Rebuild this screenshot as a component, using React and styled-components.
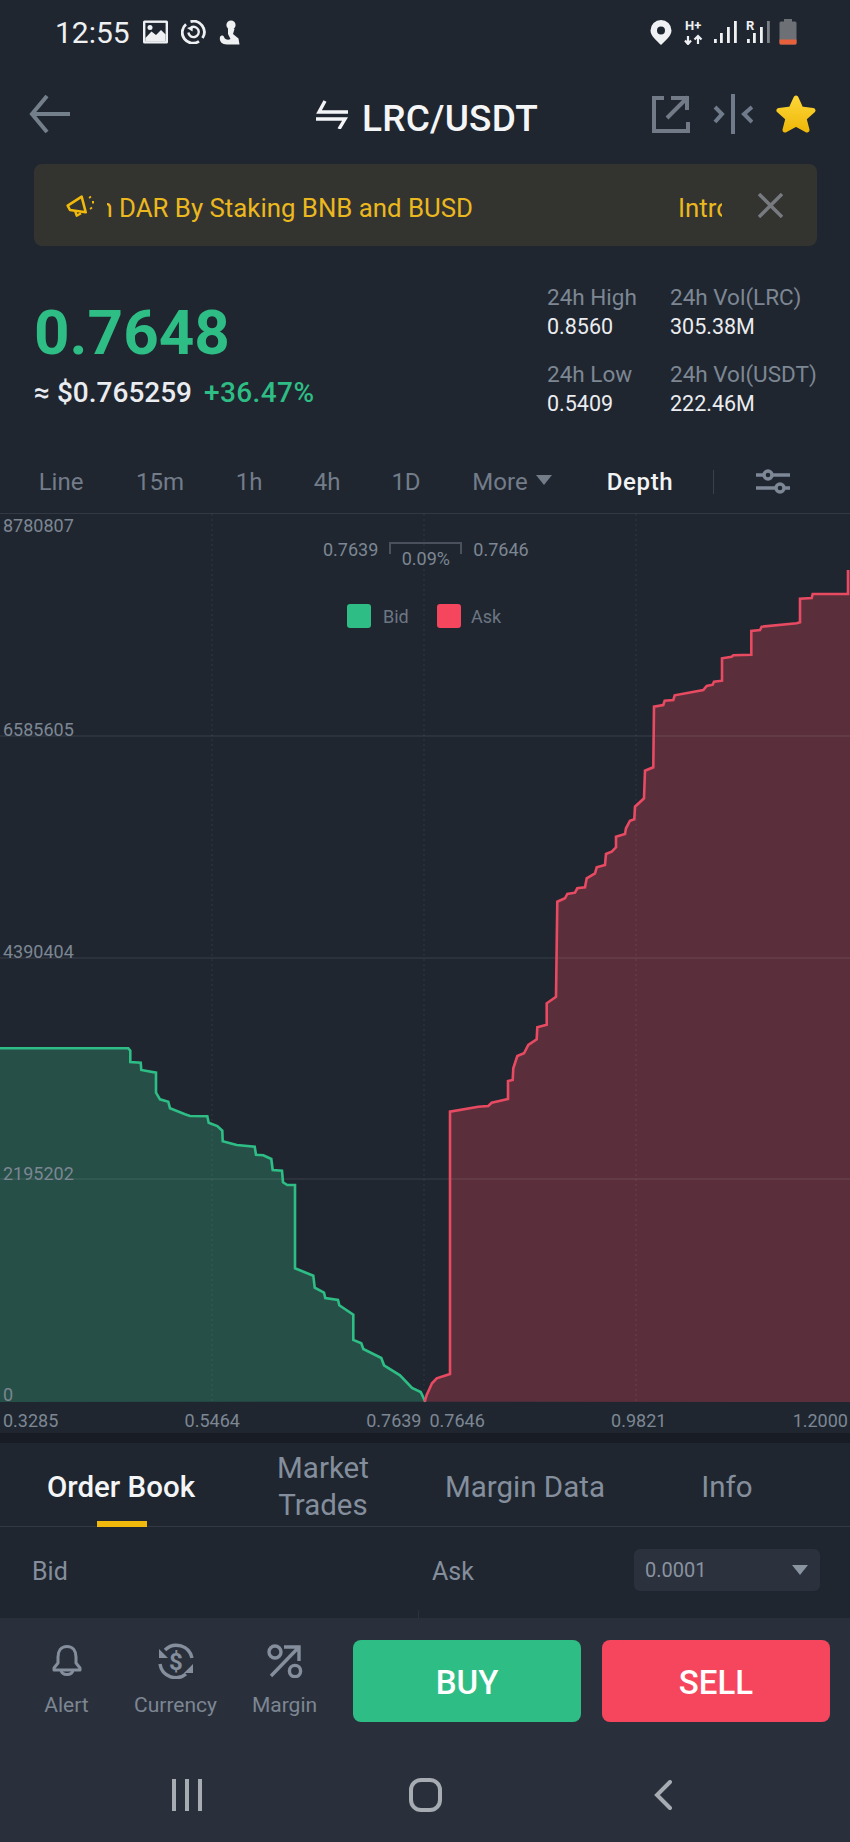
import styled, {createGlobalStyle} from 'styled-components';

const GREEN = '#2ebd85';
const RED = '#f6465d';
const FONT = 'Roboto, "Noto Sans", sans-serif';

const GlobalStyle = createGlobalStyle`
  html, body {
    margin: 0;
    padding: 0;
    background: #1f2630;
  }
  * {
    box-sizing: border-box;
  }
`;

const Page = styled.div`
  width: 850px;
  height: 1842px;
  display: flex;
  flex-direction: column;
  overflow: hidden;
  background: #1f2630;
  font-family: ${FONT};
  color: #eaecef;
`;

const StatusBar = styled.div`
  height: 64px;
  padding: 0 53px 0 55px;
  display: flex;
  align-items: center;
  justify-content: space-between;
`;

const StatusGroup = styled.div`
  display: flex;
  align-items: center;
  gap: ${p => p.$gap}px;
`;

const Clock = styled.span`
  font-size: 30px;
  color: #eef0f2;
`;

const PinSlot = styled.span`
  display: flex;
  margin-right: 3px;
`;

const NavBar = styled.div`
  height: 100px;
  padding: 0 34px 0 29px;
  display: flex;
  align-items: center;
  justify-content: space-between;
`;

const Title = styled.div`
  position: absolute;
  left: 316px;
  display: flex;
  align-items: center;
  gap: 14px;
  font-size: 37px;
  font-weight: 500;
  letter-spacing: 0.2px;
  color: #f4f5f6;
`;

const TitleText = styled.span`
  margin-top: 8px;
`;

const NavActions = styled.div`
  display: flex;
  align-items: center;
  gap: 23px;
`;

const Banner = styled.div`
  height: 82px;
  margin: 0 33px 0 34px;
  padding: 0 34px 0 32px;
  display: flex;
  align-items: center;
  background: #33342f;
  border-radius: 8px;
`;

const Marquee = styled.div`
  width: 615px;
  margin: 6px 36px 0 13px;
  overflow: hidden;
  white-space: nowrap;
  font-size: 25.8px;
  color: #ecb81f;
`;

const MarqueeTrack = styled.div`
  display: flex;
  gap: 205px;
  margin-left: -46px;
`;

const Stats = styled.div`
  height: 201px;
  padding: 36px 34px 0;
  display: flex;
  justify-content: space-between;
`;

const PriceBlock = styled.div`
  padding-top: 16px;
`;

const LastPrice = styled.div`
  font-size: 62px;
  line-height: 70px;
  font-weight: 700;
  color: ${GREEN};
`;

const PriceMeta = styled.div`
  margin-top: 7px;
  display: flex;
  gap: 12px;
  font-size: 28px;
  line-height: 36px;
  font-weight: 500;
`;

const Change = styled.span`
  letter-spacing: 0.4px;
  color: ${GREEN};
`;

const StatGrid = styled.div`
  display: grid;
  grid-template-columns: 123px 146px;
  grid-auto-rows: 77px;
  align-content: start;
`;

const StatCell = styled.div`
  height: 60px;
`;

const StatLabel = styled.div`
  font-size: 22.5px;
  line-height: 30px;
  color: #7d8693;
  white-space: nowrap;
`;

const StatValue = styled.div`
  font-size: 21.5px;
  line-height: 30px;
  color: #eaecef;
`;

const Intervals = styled.div`
  height: 67px;
  padding: 4px 0 0 22px;
  display: grid;
  grid-template-columns: 78px 120px 58px 98px 60px 152px 104px 42px 78px;
  align-items: center;
  justify-items: center;
  border-bottom: 1px solid #323945;
`;

const Interval = styled.div`
  display: flex;
  align-items: center;
  gap: 8px;
  font-size: 24px;
  letter-spacing: ${p => (p.$active ? 0.6 : 0)}px;
  font-weight: ${p => (p.$active ? 500 : 400)};
  color: ${p => (p.$active ? '#f2f3f5' : '#737c89')};
`;

const Caret = styled.span`
  width: 0;
  height: 0;
  margin-top: ${p => p.$lift || 0}px;
  border-left: ${p => p.$size}px solid transparent;
  border-right: ${p => p.$size}px solid transparent;
  border-top: ${p => p.$size + 2}px solid ${p => p.$color};
`;

const Separator = styled.div`
  width: 1px;
  height: 24px;
  background: #3a414d;
`;

const Chart = styled.div`
  position: relative;
  height: 888px;
`;

const ChartSvg = styled.svg`
  display: block;
  width: 850px;
  height: 888px;
  overflow: visible;
`;

const AxisText = styled.text`
  font-family: ${FONT};
  font-size: 18px;
  fill: #7d8693;
`;

const Spread = styled.div`
  position: absolute;
  top: 25px;
  left: 323px;
  display: flex;
  gap: 11px;
  font-size: 18px;
  line-height: 22px;
  color: #7d8693;
`;

const SpreadBracket = styled.div`
  width: 73px;
  height: 12px;
  margin-top: 3px;
  border: 2px solid #4a515d;
  border-bottom: 0;
  text-align: center;
  line-height: 30px;
  font-size: 18px;
`;

const Legend = styled.div`
  position: absolute;
  top: 90px;
  left: 347px;
  display: flex;
  align-items: center;
  font-size: 18px;
  color: #6d7683;
`;

const Swatch = styled.span`
  width: 24px;
  height: 24px;
  margin-right: ${p => p.$space}px;
  background: ${p => p.$color};
  border-radius: 3px;
`;

const LegendLabel = styled.span`
  width: ${p => p.$width}px;
`;

const XAxis = styled.div`
  height: 31px;
  padding: 5px 2px 0 3px;
  display: flex;
  justify-content: space-between;
  align-items: center;
  font-size: 18px;
  color: #7d8693;
`;

const XPair = styled.div`
  display: flex;
  gap: 8px;
`;

const Band = styled.div`
  height: 10px;
  background: #181d25;
`;

const TabBar = styled.div`
  position: relative;
  height: 84px;
  padding: 5px 20px 0;
  display: grid;
  grid-template-columns: repeat(4, 202px);
  align-items: center;
  justify-items: center;
  border-bottom: 1px solid #323945;
`;

const Tab = styled.div`
  font-size: 29.5px;
  line-height: 37px;
  text-align: center;
  font-weight: ${p => (p.$active ? 500 : 400)};
  color: ${p => (p.$active ? '#f4f5f6' : '#848e9c')};
`;

const TabMark = styled.div`
  position: absolute;
  left: 97px;
  bottom: -1px;
  width: 50px;
  height: 6px;
  background: #f0b90b;
`;

const BookHead = styled.div`
  position: relative;
  height: 91px;
  padding: 22px 30px 0 32px;
  display: flex;
  align-items: flex-start;
  font-size: 25px;
  color: #848e9c;
  &::after {
    content: '';
    position: absolute;
    left: 418px;
    bottom: 0;
    width: 1px;
    height: 8px;
    background: #2b323d;
  }
`;

const BookColumn = styled.div`
  width: ${p => p.$width}px;
  padding-top: 2px;
  line-height: 42px;
`;

const StepSelect = styled.div`
  width: 186px;
  height: 42px;
  padding: 0 12px 0 11px;
  display: flex;
  align-items: center;
  justify-content: space-between;
  background: #2b313d;
  border-radius: 6px;
  font-size: 20px;
  color: #8a93a0;
`;

const ActionBar = styled.div`
  flex: 1;
  background: #2a303b;
`;

const ActionRow = styled.div`
  padding: 22px 20px 0 12px;
  display: flex;
  align-items: flex-start;
`;

const Tool = styled.div`
  width: 109px;
  display: flex;
  flex-direction: column;
  align-items: center;
  padding-top: 4px;
  font-size: 21px;
  line-height: 26px;
  color: #7d8693;
`;

const ToolIcon = styled.div`
  height: 34px;
  display: flex;
  align-items: center;
  justify-content: center;
`;

const ToolLabel = styled.span`
  margin-top: 14px;
`;

const TradeButton = styled.div`
  width: 228px;
  height: 82px;
  padding-top: 3px;
  margin-left: ${p => p.$space}px;
  display: flex;
  align-items: center;
  justify-content: center;
  background: ${p => p.$color};
  border-radius: 8px;
  color: #fff;
  font-size: 33px;
  font-weight: 500;
`;

const SoftKeys = styled.div`
  padding-top: 56px;
  display: grid;
  grid-template-columns: repeat(3, 238px);
  justify-content: center;
  justify-items: center;
  align-items: center;
`;

const BID_TRACE = [
  [0, 85], [385, 85], [391, 92], [391, 126], [422, 128], [424, 150], [468, 158], [468, 218],
  [480, 238], [505, 245], [510, 265], [555, 283], [570, 288], [622, 289], [626, 308], [652, 318],
  [667, 332], [668, 364], [710, 375], [764, 380], [768, 404], [790, 406], [814, 417], [818, 450],
  [846, 452], [849, 487], [862, 495], [885, 495], [885, 745], [940, 767], [944, 803], [972, 818],
  [976, 834], [1014, 840], [1018, 856], [1060, 884], [1060, 960], [1084, 970], [1090, 987],
  [1144, 1014], [1152, 1036], [1200, 1066], [1236, 1104], [1262, 1116], [1276, 1145],
];

const ASK_LOW = [
  [14, 1205], [20, 1185], [36, 1150], [50, 1135], [90, 1122], [90, 335], [175, 320], [205, 318],
  [215, 308], [264, 297], [264, 243], [278, 240], [280, 205], [292, 168], [312, 160], [325, 135],
  [350, 118], [352, 82], [380, 74],
];

const ASK_HIGH = [
  [50, 1360], [78, 1340], [82, 1055], [105, 1045], [112, 1032], [135, 1028], [142, 1015], [165, 1012],
  [170, 985], [195, 970], [200, 952], [225, 945], [228, 912], [245, 905], [258, 892], [258, 860],
  [285, 852], [288, 835], [300, 812], [313, 808], [315, 770], [342, 745], [345, 662], [370, 652],
  [372, 470], [400, 465], [404, 452], [430, 450], [434, 436], [520, 420], [530, 408], [548, 404],
  [552, 395], [576, 392], [576, 325], [605, 320], [610, 316], [664, 314], [664, 243], [690, 240],
  [695, 230], [800, 220], [810, 217], [810, 146], [845, 144], [848, 132], [954, 132], [954, 60],
];

const bidPoints = BID_TRACE.map(([x, y]) => [x / 3, 1020 + y / 3]);
const askPoints = [
  ...ASK_LOW.map(([x, y]) => [420 + x / 3, 1000 + y / 3]),
  ...ASK_HIGH.map(([x, y]) => [530 + x / 3, 550 + y / 3]),
];
const toPath = points => points.map(([x, y]) => `${x.toFixed(1)},${y.toFixed(1)}`).join(' ');

const DepthChart = () => (
  <ChartSvg viewBox="0 514 850 888">
    <polygon points={`0,1402 ${toPath(bidPoints)}`} fill="#254f47" />
    <polygon points={`${toPath(askPoints)} 850,570 850,1402`} fill="#5a2f3b" />
    {[736, 958, 1179].map(y => (
      <line key={y} x1="0" x2="850" y1={y} y2={y} stroke="#ffffff" strokeOpacity="0.12" />
    ))}
    {[212, 424, 636].map(x => (
      <line key={x} x1={x} x2={x} y1="514" y2="1402" stroke="#ffffff" strokeOpacity="0.08" strokeDasharray="2 3" />
    ))}
    <polyline points={toPath(bidPoints)} fill="none" stroke={GREEN} strokeWidth="2.6" />
    <polyline points={toPath(askPoints)} fill="none" stroke="#e84a62" strokeWidth="2.6" />
    <AxisText x="3" y="532">8780807</AxisText>
    <AxisText x="3" y="736">6585605</AxisText>
    <AxisText x="3" y="958">4390404</AxisText>
    <AxisText x="3" y="1180">2195202</AxisText>
    <AxisText x="3" y="1401">0</AxisText>
  </ChartSvg>
);

const ImageGlyph = () => (
  <svg width="25" height="24" viewBox="0 0 25 24">
    <rect x="0" y="0.5" width="25" height="23" rx="1.5" fill="#eef0f2" />
    <rect x="2.4" y="2.9" width="20.2" height="18.2" fill="#1f2630" />
    <path d="M2.4 18 L8.5 11.5 L13 15 L18 10 L22.6 14.5 V21.1 H2.4 Z" fill="#eef0f2" />
    <circle cx="7" cy="7.5" r="2.5" fill="#eef0f2" />
  </svg>
);

const SyncGlyph = () => (
  <svg width="25" height="24" viewBox="0 0 25 24" fill="none" stroke="#eef0f2" strokeWidth="2.8">
    <path d="M9.5 1.7 A10.8 10.8 0 0 1 21.5 18" />
    <path d="M18 21.4 A10.8 10.8 0 0 1 5 4.2" />
    <path d="M10 7.4 A5.2 5.2 0 1 1 7.4 12.5" strokeWidth="2.4" />
    <path d="M6 8 L12 6 L11.5 11.5 Z" fill="#eef0f2" stroke="none" />
  </svg>
);

const FigureGlyph = () => (
  <svg width="21" height="25" viewBox="0 0 21 25" fill="#eef0f2">
    <circle cx="12" cy="5" r="4.6" />
    <path d="M9 9 H15.5 L14 14 L19.5 18.5 L20.5 24.5 H8 C3 24.5 0 21.5 1 17 C2 15 4.5 15 5 17 C6 19.5 9 20.5 11.5 19 L9 14 Z" />
  </svg>
);

const PinGlyph = () => (
  <svg width="22" height="25" viewBox="0 0 22 25">
    <path fillRule="evenodd" fill="#f0f1f3" d="M11 0 A10.5 10.5 0 0 1 21.5 10.5 C21.5 16 15 21 11 25 C7 21 .5 16 .5 10.5 A10.5 10.5 0 0 1 11 0 Z M11 6.4 A4 4 0 1 0 11 14.4 A4 4 0 1 0 11 6.4 Z" />
  </svg>
);

const DataGlyph = () => (
  <svg width="20" height="26" viewBox="0 0 20 26" fill="none" stroke="#eef0f2" strokeWidth="2.2">
    <text x="1" y="11" fill="#eef0f2" stroke="none" fontFamily={FONT} fontWeight="700" fontSize="13">H+</text>
    <path d="M4 17 V25 M1 21.5 L4 25 L7 21.5 M14 25 V17 M10.5 20.5 L14 17 L17.5 20.5" />
  </svg>
);

const SignalGlyph = ({roaming}) => (
  <svg width="24" height="26" viewBox="0 0 24 26" fill="#eef0f2">
    {roaming && <text x="0" y="11" fontFamily={FONT} fontWeight="700" fontSize="13">R</text>}
    <rect x="1" y="20" width="2.8" height="4" />
    <rect x="7" y="14" width="2.8" height="10" />
    <rect x="14" y="8" width="2.8" height="16" />
    <rect x="21" y="2" width="2.8" height="22" opacity={roaming ? 0.45 : 1} />
  </svg>
);

const BatteryGlyph = () => (
  <svg width="18" height="26" viewBox="0 0 18 26">
    <rect x="5" y="0" width="8" height="3" fill="#6d7176" />
    <rect x="0.5" y="2.5" width="17" height="23" rx="1.5" fill="#6d7176" />
    <path d="M.5 20.5 H17.5 V24 A1.5 1.5 0 0 1 16 25.5 H2 A1.5 1.5 0 0 1 .5 24 Z" fill="#e8613c" />
  </svg>
);

const BackArrow = () => (
  <svg width="42" height="38" viewBox="0 0 42 38" fill="none" stroke="#73808c" strokeWidth="4">
    <path d="M41 19 H3 M18 1 L3 19 L18 37" />
  </svg>
);

const SwapGlyph = () => (
  <svg width="32" height="30" viewBox="0 0 32 30" fill="none" stroke="#f4f5f6" strokeWidth="3.4">
    <path d="M32 13 H3 L9 2" />
    <path d="M0 20 H29 L23 30" />
  </svg>
);

const ShareGlyph = () => (
  <svg width="38" height="38" viewBox="0 0 38 38" fill="none" stroke="#737a87" strokeWidth="4">
    <path d="M12 3 H2 V36 H36 V27" />
    <path d="M15 23 L36 2 M19 3 H35 V15" />
  </svg>
);

const CompareGlyph = () => (
  <svg width="40" height="42" viewBox="0 0 40 42" fill="none" stroke="#6f7a8a" strokeWidth="4">
    <path d="M20 1 V41" />
    <path d="M2 14 L9 21 L2 29 M39 14 L31 21 L39 29" />
  </svg>
);

const StarGlyph = () => (
  <svg width="40" height="38" viewBox="0 0 40 38">
    <defs>
      <linearGradient id="starFill" x1="0" x2="0" y1="0" y2="1">
        <stop offset="0" stopColor="#fcd535" />
        <stop offset="1" stopColor="#f0b90b" />
      </linearGradient>
    </defs>
    <path fill="url(#starFill)" stroke="url(#starFill)" strokeWidth="5" strokeLinejoin="round" d="M20 3 L25 14 L37 15.5 L28 23.5 L31 35 L20 29 L9 35 L12 23.5 L3 15.5 L15 14 Z" />
  </svg>
);

const MegaphoneGlyph = () => (
  <svg width="28" height="23" viewBox="0 0 28 23" fill="none" stroke="#f0b90b" strokeWidth="2.6" strokeLinejoin="round">
    <path d="M1.7 11.7 L15.7 2.7 L19.7 18.3 L4 16 Z" />
    <path d="M9 16.7 L10.7 21.7 L15 19.3" strokeWidth="2.4" />
    <path d="M23.5 2.5 L24.5 4 M26 8.3 H28 M24.5 13.5 L25.5 15" strokeWidth="2.4" />
  </svg>
);

const CloseGlyph = () => (
  <svg width="25" height="25" viewBox="0 0 25 25" fill="none" stroke="#777b80" strokeWidth="3.4">
    <path d="M1 1 L24 24 M24 1 L1 24" />
  </svg>
);

const FilterGlyph = () => (
  <svg width="34" height="26" viewBox="0 0 34 26" fill="none" stroke="#7e8795" strokeWidth="3.4">
    <path d="M0 6 H8 M16 6 H34 M0 19 H20 M28 19 H34" />
    <circle cx="12" cy="6" r="4" />
    <circle cx="24" cy="19" r="4" />
  </svg>
);

const BellGlyph = () => (
  <svg width="30" height="32" viewBox="0 0 30 32" fill="none" stroke="#848e9c" strokeWidth="3" strokeLinejoin="round">
    <path d="M15 1.5 C9 1.5 6 6 6 12 V18 L2 23 V25 H28 V23 L24 18 V12 C24 6 21 1.5 15 1.5 Z" />
    <path d="M9 25 C10 31 20 31 21 25" />
  </svg>
);

const CurrencyGlyph = () => (
  <svg width="36" height="36" viewBox="0 0 36 36" fill="none" stroke="#848e9c" strokeWidth="3.4">
    <path d="M34 15 A16 16 0 0 0 7 7" />
    <path d="M2 21 A16 16 0 0 0 28 31" />
    <path d="M1 6 V15 H10 Z M35 21 V30 H26 Z" fill="#848e9c" stroke="none" />
    <text x="18" y="26.5" textAnchor="middle" fill="#848e9c" stroke="none" fontFamily={FONT} fontWeight="700" fontSize="24">$</text>
  </svg>
);

const PercentGlyph = () => (
  <svg width="36" height="34" viewBox="0 0 36 34" fill="none" stroke="#848e9c" strokeWidth="3.4">
    <circle cx="8" cy="8" r="6" />
    <circle cx="28" cy="27" r="5.6" />
    <path d="M4 32 L32 3 M17 3 H32 V17" />
  </svg>
);

const RecentsKey = () => (
  <svg width="30" height="32" viewBox="0 0 30 32" fill="none" stroke="#a7acb3" strokeWidth="4">
    <path d="M2 0 V32 M15 0 V32 M28 0 V32" />
  </svg>
);

const HomeKey = () => (
  <svg width="33" height="34" viewBox="0 0 33 34" fill="none" stroke="#a7acb3" strokeWidth="4">
    <rect x="2" y="2" width="29" height="30" rx="10" />
  </svg>
);

const BackKey = () => (
  <svg width="18" height="30" viewBox="0 0 18 30" fill="none" stroke="#a7acb3" strokeWidth="4" strokeLinecap="round">
    <path d="M16 2 L3 15 L16 28" />
  </svg>
);

const STATS = [
  ['24h High', '0.8560'],
  ['24h Vol(LRC)', '305.38M'],
  ['24h Low', '0.5409'],
  ['24h Vol(USDT)', '222.46M'],
];

const TOOLS = [
  ['Alert', BellGlyph],
  ['Currency', CurrencyGlyph],
  ['Margin', PercentGlyph],
];

const App = () => (
  <Page>
    <GlobalStyle />
    <StatusBar>
      <StatusGroup $gap={13}>
        <Clock>12:55</Clock>
        <ImageGlyph />
        <SyncGlyph />
        <FigureGlyph />
      </StatusGroup>
      <StatusGroup $gap={9}>
        <PinSlot>
          <PinGlyph />
        </PinSlot>
        <DataGlyph />
        <SignalGlyph />
        <SignalGlyph roaming />
        <BatteryGlyph />
      </StatusGroup>
    </StatusBar>

    <NavBar>
      <BackArrow />
      <Title>
        <SwapGlyph />
        <TitleText>LRC/USDT</TitleText>
      </Title>
      <NavActions>
        <ShareGlyph />
        <CompareGlyph />
        <StarGlyph />
      </NavActions>
    </NavBar>

    <Banner>
      <MegaphoneGlyph />
      <Marquee>
        <MarqueeTrack>
          <span>Earn DAR By Staking BNB and BUSD</span>
          <span>Introducing</span>
        </MarqueeTrack>
      </Marquee>
      <CloseGlyph />
    </Banner>

    <Stats>
      <PriceBlock>
        <LastPrice>0.7648</LastPrice>
        <PriceMeta>
          <span>≈ $0.765259</span>
          <Change>+36.47%</Change>
        </PriceMeta>
      </PriceBlock>
      <StatGrid>
        {STATS.map(([label, value]) => (
          <StatCell key={label}>
            <StatLabel>{label}</StatLabel>
            <StatValue>{value}</StatValue>
          </StatCell>
        ))}
      </StatGrid>
    </Stats>

    <Intervals>
      <Interval>Line</Interval>
      <Interval>15m</Interval>
      <Interval>1h</Interval>
      <Interval>4h</Interval>
      <Interval>1D</Interval>
      <Interval>
        More
        <Caret $size={8} $color="#737c89" $lift={-4} />
      </Interval>
      <Interval $active>Depth</Interval>
      <Separator />
      <FilterGlyph />
    </Intervals>

    <Chart>
      <DepthChart />
      <Spread>
        <span>0.7639</span>
        <SpreadBracket>0.09%</SpreadBracket>
        <span>0.7646</span>
      </Spread>
      <Legend>
        <Swatch $color={GREEN} $space={12} />
        <LegendLabel $width={54}>Bid</LegendLabel>
        <Swatch $color={RED} $space={10} />
        <span>Ask</span>
      </Legend>
    </Chart>

    <XAxis>
      <span>0.3285</span>
      <span>0.5464</span>
      <XPair>
        <span>0.7639</span>
        <span>0.7646</span>
      </XPair>
      <span>0.9821</span>
      <span>1.2000</span>
    </XAxis>
    <Band />

    <TabBar>
      <Tab $active>Order Book</Tab>
      <Tab>
        Market
        <br />
        Trades
      </Tab>
      <Tab>Margin Data</Tab>
      <Tab>Info</Tab>
      <TabMark />
    </TabBar>

    <BookHead>
      <BookColumn $width={400}>Bid</BookColumn>
      <BookColumn $width={202}>Ask</BookColumn>
      <StepSelect>
        0.0001
        <Caret $size={8} $color="#8a93a0" />
      </StepSelect>
    </BookHead>

    <ActionBar>
      <ActionRow>
        {TOOLS.map(([label, Glyph]) => (
          <Tool key={label}>
            <ToolIcon>
              <Glyph />
            </ToolIcon>
            <ToolLabel>{label}</ToolLabel>
          </Tool>
        ))}
        <TradeButton $color={GREEN} $space={14}>BUY</TradeButton>
        <TradeButton $color={RED} $space={21}>SELL</TradeButton>
      </ActionRow>
      <SoftKeys>
        <RecentsKey />
        <HomeKey />
        <BackKey />
      </SoftKeys>
    </ActionBar>
  </Page>
);

export default App;
